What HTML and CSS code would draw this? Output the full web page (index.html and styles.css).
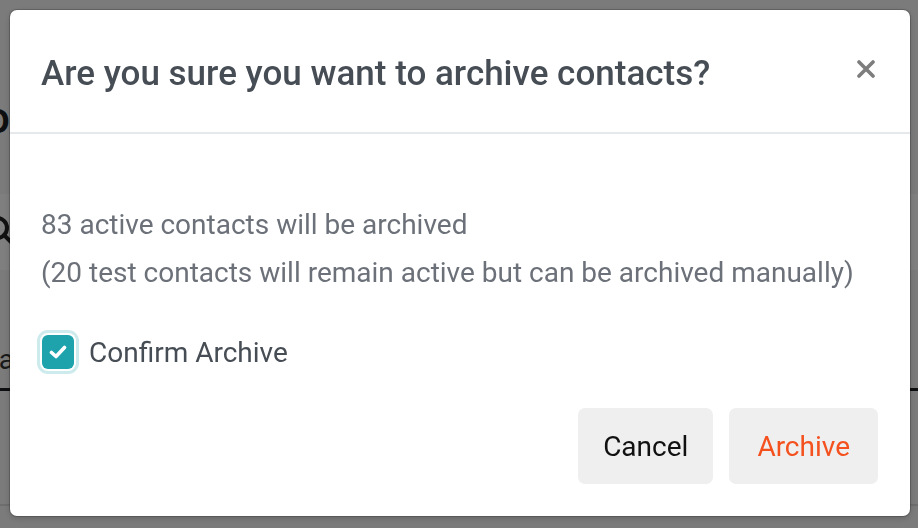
FILE: index.html
```html
<!DOCTYPE html>
<html>

<head>
    <title>Archive contacts</title>
    <meta charset="utf-8">
    <meta name="viewport" content="width=device-width, initial-scale=1.0">
    <link rel="stylesheet" href="styles.css">
</head>

<body>
    <!-- side bag, kun kanten ses bag overlay -->
    <main class="side">
        <h1 class="side-titel">Group</h1>
        <div class="soeg">
            <svg class="soeg-ikon" width="34" height="34" viewBox="0 0 34 34">
                <circle cx="13" cy="13" r="10" fill="none" stroke="#222" stroke-width="4" />
                <line x1="20" y1="20" x2="31" y2="31" stroke="#222" stroke-width="4" stroke-linecap="round" />
            </svg>
        </div>
        <nav class="faner"><span class="fane">Contacts</span></nav>
        <div class="raekke">Ann</div>
    </main>

    <div class="overlay"></div>

    <section class="modal">
        <header class="modal-top">
            <h2 class="modal-titel">Are you sure you want to archive contacts?</h2>
            <button class="luk" aria-label="Luk">
                <svg width="18" height="18" viewBox="0 0 18 18">
                    <path d="M2 2 L16 16 M16 2 L2 16" stroke="#7d7d7d" stroke-width="3.6" stroke-linecap="round" />
                </svg>
            </button>
        </header>

        <div class="modal-indhold">
            <p class="tekst">83 active contacts will be archived</p>
            <p class="tekst">(20 test contacts will remain active but can be archived manually)</p>

            <label class="bekraeft">
                <span class="boks">
                    <svg width="18" height="14" viewBox="0 0 18 14">
                        <path d="M2.5 7.5 L7 11.5 L15.5 2.5" fill="none" stroke="#fff" stroke-width="3.6" stroke-linecap="round" stroke-linejoin="round" />
                    </svg>
                </span>
                Confirm Archive
            </label>
        </div>

        <footer class="modal-bund">
            <button class="knap">Cancel</button>
            <button class="knap arkiver">Archive</button>
        </footer>
    </section>
</body>

</html>
```

FILE: styles.css
```css
body {
    margin: 0;
    background: #f6f6f6;
    font-family: Roboto, "Liberation Sans", sans-serif;
    overflow: hidden;
}

/* siden bag modal */
.side {
    margin-left: -60px;
    padding-top: 96px;
}

.side-titel {
    margin: 0;
    font-size: 44px;
    font-weight: 500;
    color: #1b1e21;
    line-height: 44px;
}

.soeg {
    margin-top: 54px;
    height: 76px;
    background: #fff;
    display: flex;
    align-items: center;
    padding-left: 44px;
}

.faner {
    margin-top: 60px;
    height: 58px;
    border-bottom: 3px solid #1b1e21;
    display: flex;
    align-items: center;
}

.fane {
    font-size: 28px;
    color: #333;
}

.raekke {
    height: 113px;
    border-bottom: 2px solid #ddd;
    display: flex;
    align-items: center;
    font-size: 28px;
    color: #333;
    padding-left: 10px;
}

.overlay {
    position: fixed;
    top: 0;
    left: 0;
    width: 100vw;
    height: 100vh;
    background: rgba(0, 0, 0, 0.5);
}

/* modal */
.modal {
    position: fixed;
    top: 10px;
    left: 10px;
    width: 900px;
    height: 506px;
    background: #fff;
    border-radius: 7px;
    box-shadow: 0 0 0 1px rgba(0, 0, 0, 0.18), 0 2px 6px rgba(0, 0, 0, 0.2);
    display: flex;
    flex-direction: column;
}

.modal-top {
    height: 124px;
    box-sizing: border-box;
    padding: 5px 32px 0 31px;
    border-bottom: 2px solid #e6e9ec;
    display: flex;
    align-items: center;
    justify-content: space-between;
}

.modal-titel {
    margin: 0;
    font-size: 35px;
    font-weight: 500;
    color: #474d55;
}

.luk {
    border: none;
    background: none;
    padding: 0;
    margin: -10px 3px 0 0;
    cursor: pointer;
    display: flex;
}

.modal-indhold {
    flex: 1;
    padding: 67px 32px 0 31px;
}

.tekst {
    margin: 0;
    font-size: 28px;
    line-height: 48px;
    color: #6c7179;
}

.bekraeft {
    margin-top: 33px;
    display: flex;
    align-items: center;
    gap: 15px;
    font-size: 28px;
    color: #474d55;
}

.boks {
    width: 32px;
    height: 34px;
    margin: 5px 0 5px 1px;
    background: #1ea3ad;
    border-radius: 6px;
    box-shadow: 0 0 0 2px #fff, 0 0 0 5px #cdeaed;
    display: flex;
    align-items: center;
    justify-content: center;
}

.modal-bund {
    display: flex;
    justify-content: flex-end;
    gap: 16px;
    padding: 0 32px 32px;
}

.knap {
    height: 76px;
    padding: 0 25px;
    border: none;
    border-radius: 7px;
    background: #efefef;
    font-family: inherit;
    font-size: 28px;
    color: #111;
    cursor: pointer;
}

.arkiver {
    padding: 0 28px;
    color: #f4511e;
}
```
